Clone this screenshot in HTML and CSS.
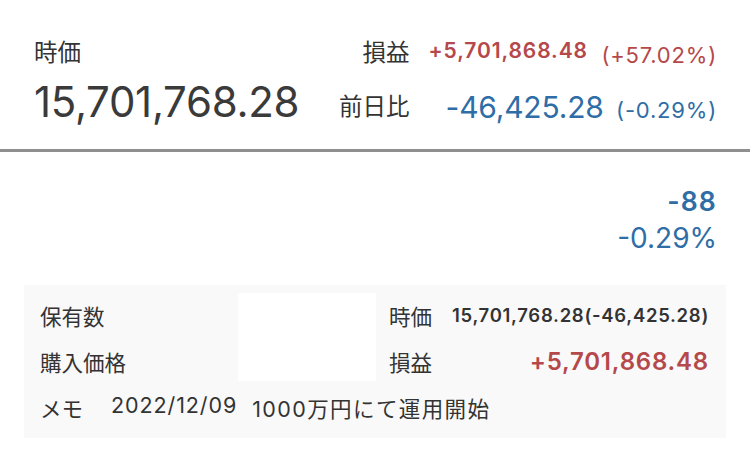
FILE: index.html
```html
<!DOCTYPE html>
<html>
  <head>
    <meta charset="utf-8">
    <title>保有銘柄</title>
    <link rel="stylesheet" href="styles.css">
  </head>
  <body>
    <div class="head">
      <div class="head-left">
        <div class="label">時価</div>
        <div class="price">15,701,768.28</div>
      </div>
      <div class="head-right">
        <div class="label">損益</div>
        <div class="change-line">
          <span class="pl-value up">+5,701,868.48</span>
          <span class="pct up">(+57.02%)</span>
        </div>
        <div class="label">前日比</div>
        <div class="change-line">
          <span class="day-value down">-46,425.28</span>
          <span class="pct down">(-0.29%)</span>
        </div>
      </div>
    </div>

    <div class="day-change">
      <div class="day-count down">-88</div>
      <div class="day-pct down">-0.29%</div>
    </div>

    <div class="detail">
      <div class="detail-label">保有数</div>
      <div class="hidden-value"></div>
      <div class="detail-label side">時価</div>
      <div class="detail-value">15,701,768.28(-46,425.28)</div>
      <div class="detail-label second">購入価格</div>
      <div class="detail-label side">損益</div>
      <div class="detail-value big up">+5,701,868.48</div>
      <div class="memo">
        <span class="memo-label">メモ</span>
        <span class="memo-date">2022/12/09</span>
        <span class="memo-text">1000万円にて運用開始</span>
      </div>
    </div>
  </body>
</html>
```

FILE: styles.css
```css
body {
  margin: 0;
  background: #fff;
  color: #333;
  font-family: Inter, "Noto Sans CJK JP", sans-serif;
}
.up {
  color: #b5484a;
}
.down {
  color: #2e6da6;
}

/* header */
.head {
  display: flex;
  justify-content: space-between;
  padding: 30px 33px 11px 34px;
  border-bottom: 3px solid #8f8f8f;
}
.head .label {
  font-size: 23.5px;
  line-height: 46px;
}
.price {
  font-size: 42px;
  line-height: 52px;
  font-weight: 400;
  letter-spacing: -0.3px;
  color: #3a3a3a;
}
.head-right {
  display: grid;
  grid-template-columns: auto auto;
  grid-template-rows: 46px 62px;
  column-gap: 19px;
  align-items: center;
}
.head-right .label {
  text-align: right;
}
.change-line {
  text-align: right;
  white-space: nowrap;
}
.pl-value {
  font-size: 21px;
  font-weight: 600;
  letter-spacing: 0.9px;
  vertical-align: 5px;
  margin-right: 9px;
}
.pct {
  font-size: 22px;
  letter-spacing: 0.8px;
}
.day-value {
  font-size: 30px;
  letter-spacing: -0.2px;
  margin-right: 8px;
}

/* day change */
.day-change {
  padding: 32px 33px 0 0;
  text-align: right;
}
.day-count {
  font-size: 26.5px;
  font-weight: 600;
  letter-spacing: 1.2px;
  line-height: 34px;
}
.day-pct {
  font-size: 28px;
  line-height: 40px;
}

/* detail box */
.detail {
  display: grid;
  grid-template-columns: 198px 138px auto 1fr;
  grid-template-rows: 46px 46px 46px;
  align-items: center;
  margin: 27px 24px 0 24px;
  padding: 7px 17px 8px 16px;
  background: #f9f9f9;
  font-size: 21.5px;
}
.hidden-value {
  grid-row: 1 / 3;
  grid-column: 2;
  align-self: start;
  margin-top: 1px;
  height: 88px;
  background: #fff;
}
.detail-label.side {
  margin-left: 13px;
}
.detail-label.second {
  grid-column: 1;
  grid-row: 2;
}
.detail-value {
  justify-self: end;
  font-size: 18.5px;
  font-weight: 600;
  letter-spacing: 0.7px;
}
.detail-value.big {
  font-size: 24px;
  letter-spacing: 0.8px;
}
.memo {
  grid-column: 1 / 5;
  display: flex;
}
.memo-label {
  margin-right: 28px;
}
.memo-date {
  margin-right: 15px;
  letter-spacing: 0.9px;
}
.memo-text {
  letter-spacing: 1.4px;
}
```
